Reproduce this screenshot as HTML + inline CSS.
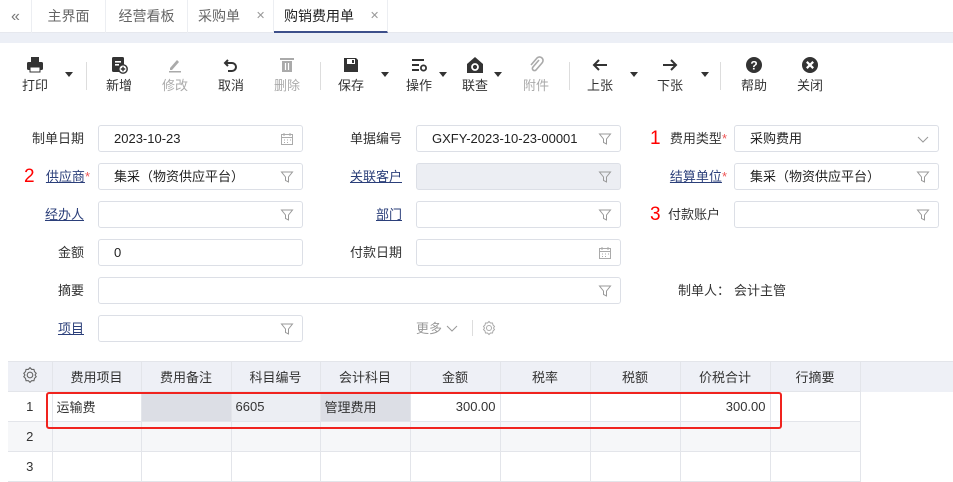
<!DOCTYPE html>
<html><head><meta charset="utf-8"><style>
*{box-sizing:border-box;margin:0;padding:0}
body{width:953px;height:471px;overflow:hidden;background:#fff;font-family:"Liberation Sans","Noto Sans CJK SC",sans-serif;font-size:13px;color:#333;position:relative}
.abs{position:absolute}
.tabs{left:0;top:0;width:953px;height:33px;background:#fff;border-bottom:1px solid #e6e8ee}
.tab{position:absolute;top:0;height:33px;line-height:33px;font-size:14px;color:#666;border-right:1px solid #eceef2}
.band{left:0;top:33px;width:953px;height:10px;background:#eceff6}
.tb{position:absolute;top:56px;text-align:center;font-size:13px;color:#333;width:40px}
.tb svg{display:block;margin:0 auto 1px}
.tb.dis{color:#aaa}
.caret{position:absolute;top:72px;width:0;height:0;border-left:4px solid transparent;border-right:4px solid transparent;border-top:5px solid #333}
.sep{position:absolute;top:62px;width:1px;height:28px;background:#ddd}
.lbl{position:absolute;text-align:right;font-size:13px;color:#333;height:27px;line-height:27px}
.lbl u{color:#2b3f7a;text-decoration:underline}
.lbl i{color:#e55;font-style:normal}
.inp{position:absolute;height:27px;border:1px solid #dcdfe6;border-radius:3px;background:#fff;line-height:25px;padding-left:15px;font-size:13px;color:#222}
.inp.g{background:#eceef3}
.ic{position:absolute;right:8px;top:6px}
.num{position:absolute;color:#f00;font-size:19px;line-height:27px}
table{border-collapse:collapse;position:absolute;left:8px;top:361px}
td{border:1px solid #e3e5ea;height:30px;font-size:13px;padding:0 4px}
th{height:30px;font-weight:normal;font-size:13px;background:#eef0f6;border:1px solid #e3e5ea;color:#333}
tr td:first-child,tr th:first-child{border-left:none}
</style></head><body>
<div class="abs tabs">
 <div class="tab" style="left:0;width:32px;text-align:center;font-size:16px;color:#777;font-weight:300">«</div>
 <div class="tab" style="left:32px;width:74px;text-align:center">主界面</div>
 <div class="tab" style="left:106px;width:82px;text-align:center">经营看板</div>
 <div class="tab" style="left:188px;width:86px;padding-left:10px">采购单<span style="position:absolute;left:68px;font-size:11px;color:#999">✕</span></div>
 <div class="tab" style="left:274px;width:114px;padding-left:10px;color:#222;border-bottom:2px solid #3d4f8a;height:33px">购销费用单<span style="position:absolute;left:96px;font-size:11px;color:#999">✕</span></div>
</div>
<div class="abs band"></div>

<div class="tb" style="left:15px"><svg width="18" height="18" viewBox="0 0 18 18"><rect x="5" y="1" width="8" height="5" fill="#333"/><rect x="1" y="6" width="16" height="8" rx="1.5" fill="#333"/><rect x="4" y="11" width="10" height="5" fill="#fff" stroke="#333"/></svg>打印</div>
<div class="caret" style="left:65px"></div>
<div class="sep" style="left:86px"></div>
<div class="tb" style="left:99px"><svg width="18" height="18" viewBox="0 0 18 18"><rect x="2" y="1" width="12" height="15" rx="1.5" fill="#333"/><rect x="5" y="5" width="6" height="1.6" fill="#fff"/><rect x="5" y="8" width="4" height="1.6" fill="#fff"/><circle cx="13" cy="13" r="4.2" fill="#fff" stroke="#333" stroke-width="1.4"/><path d="M13 10.8v4.4M10.8 13h4.4" stroke="#333" stroke-width="1.4"/></svg>新增</div>
<div class="tb dis" style="left:155px"><svg width="18" height="18" viewBox="0 0 18 18"><path d="M4 12l7-8 2 2-7 8H4z" fill="#aaa"/><rect x="3" y="15" width="12" height="1.5" fill="#aaa"/></svg>修改</div>
<div class="tb" style="left:211px"><svg width="18" height="18" viewBox="0 0 18 18"><path d="M6 4l-3 3 3 3" fill="none" stroke="#333" stroke-width="2"/><path d="M3 7h7a4 4 0 010 8H6" fill="none" stroke="#333" stroke-width="2"/></svg>取消</div>
<div class="tb dis" style="left:267px"><svg width="18" height="18" viewBox="0 0 18 18"><rect x="2" y="2" width="14" height="2" fill="#aaa"/><rect x="4" y="5" width="10" height="11" fill="#aaa"/><path d="M7.5 7v7M10.5 7v7" stroke="#fff" stroke-width="1.2"/></svg>删除</div>
<div class="sep" style="left:320px"></div>
<div class="tb" style="left:331px"><svg width="18" height="18" viewBox="0 0 18 18"><path d="M2 2h12l2 2v12H2z" fill="#333"/><rect x="5" y="3" width="8" height="5" fill="#fff"/><rect x="10" y="4" width="2" height="3" fill="#333"/></svg>保存</div>
<div class="caret" style="left:381px"></div>
<div class="tb" style="left:399px"><svg width="18" height="18" viewBox="0 0 18 18"><path d="M2 4h12M2 9h7M2 14h7" stroke="#333" stroke-width="2"/><circle cx="13.5" cy="12" r="2.6" fill="none" stroke="#333" stroke-width="1.8"/></svg>操作</div>
<div class="caret" style="left:439px"></div>
<div class="tb" style="left:455px"><svg width="18" height="18" viewBox="0 0 18 18"><path d="M9 1l8 7v9H1V8z" fill="#333"/><circle cx="9" cy="11" r="3" fill="none" stroke="#fff" stroke-width="1.8"/></svg>联查</div>
<div class="caret" style="left:494px"></div>
<div class="tb dis" style="left:516px"><svg width="18" height="18" viewBox="0 0 18 18"><path d="M12 4l-6 7a2 2 0 003 3l6-7a3.5 3.5 0 00-5-5L4 9" fill="none" stroke="#aaa" stroke-width="1.6"/></svg>附件</div>
<div class="sep" style="left:569px"></div>
<div class="tb" style="left:580px"><svg width="18" height="18" viewBox="0 0 18 18"><path d="M16 9H3M8 4L3 9l5 5" fill="none" stroke="#333" stroke-width="2"/></svg>上张</div>
<div class="caret" style="left:630px"></div>
<div class="tb" style="left:650px"><svg width="18" height="18" viewBox="0 0 18 18"><path d="M2 9h13M10 4l5 5-5 5" fill="none" stroke="#333" stroke-width="2"/></svg>下张</div>
<div class="caret" style="left:701px"></div>
<div class="sep" style="left:720px"></div>
<div class="tb" style="left:734px"><svg width="18" height="18" viewBox="0 0 18 18"><circle cx="9" cy="9" r="8" fill="#333"/><text x="9" y="13.5" font-size="12" font-weight="bold" fill="#fff" text-anchor="middle" font-family="Liberation Sans">?</text></svg>帮助</div>
<div class="tb" style="left:790px"><svg width="18" height="18" viewBox="0 0 18 18"><circle cx="9" cy="9" r="8" fill="#333"/><path d="M5.8 5.8l6.4 6.4M12.2 5.8l-6.4 6.4" stroke="#fff" stroke-width="2.2"/></svg>关闭</div>

<svg width="0" height="0" style="position:absolute"><defs>
<symbol id="f" viewBox="0 0 14 14"><path d="M1.5 2h11L8.5 7v5l-3-1.5V7z" fill="none" stroke="#999" stroke-width="1"/></symbol>
<symbol id="c" viewBox="0 0 14 14"><rect x="1.5" y="2.5" width="11" height="10" fill="none" stroke="#aaa"/><path d="M1.5 5.5h11M4 1v3M10 1v3M4 8h1M7 8h1M10 8h1M4 10.5h1M7 10.5h1" stroke="#aaa"/></symbol>
</defs></svg>

<div class="lbl" style="left:20px;top:125px;width:64px">制单日期</div>
<div class="inp" style="left:98px;top:125px;width:205px">2023-10-23<svg class="ic" width="14" height="14"><use href="#c"/></svg></div>
<div class="lbl" style="left:330px;top:125px;width:72px">单据编号</div>
<div class="inp" style="left:416px;top:125px;width:205px">GXFY-2023-10-23-00001<svg class="ic" width="14" height="14"><use href="#f"/></svg></div>
<div class="num" style="left:650px;top:125px">1</div>
<div class="lbl" style="left:660px;top:125px;width:67px">费用类型<i>*</i></div>
<div class="inp" style="left:734px;top:125px;width:205px">采购费用<svg class="ic" width="14" height="14" viewBox="0 0 14 14"><path d="M2 5l5 5 5-5" fill="none" stroke="#999"/></svg></div>

<div class="num" style="left:24px;top:163px">2</div>
<div class="lbl" style="left:40px;top:163px;width:50px"><u>供应商</u><i>*</i></div>
<div class="inp" style="left:98px;top:163px;width:205px">集采（物资供应平台）<svg class="ic" width="14" height="14"><use href="#f"/></svg></div>
<div class="lbl" style="left:330px;top:163px;width:72px"><u>关联客户</u></div>
<div class="inp g" style="left:416px;top:163px;width:205px"><svg class="ic" width="14" height="14"><use href="#f"/></svg></div>
<div class="lbl" style="left:660px;top:163px;width:67px"><u>结算单位</u><i>*</i></div>
<div class="inp" style="left:734px;top:163px;width:205px">集采（物资供应平台）<svg class="ic" width="14" height="14"><use href="#f"/></svg></div>

<div class="lbl" style="left:20px;top:201px;width:64px"><u>经办人</u></div>
<div class="inp" style="left:98px;top:201px;width:205px"><svg class="ic" width="14" height="14"><use href="#f"/></svg></div>
<div class="lbl" style="left:330px;top:201px;width:72px"><u>部门</u></div>
<div class="inp" style="left:416px;top:201px;width:205px"><svg class="ic" width="14" height="14"><use href="#f"/></svg></div>
<div class="num" style="left:650px;top:201px">3</div>
<div class="lbl" style="left:660px;top:201px;width:60px">付款账户</div>
<div class="inp" style="left:734px;top:201px;width:205px"><svg class="ic" width="14" height="14"><use href="#f"/></svg></div>

<div class="lbl" style="left:20px;top:239px;width:64px">金额</div>
<div class="inp" style="left:98px;top:239px;width:205px">0</div>
<div class="lbl" style="left:330px;top:239px;width:72px">付款日期</div>
<div class="inp" style="left:416px;top:239px;width:205px"><svg class="ic" width="14" height="14"><use href="#c"/></svg></div>

<div class="lbl" style="left:20px;top:277px;width:64px">摘要</div>
<div class="inp" style="left:98px;top:277px;width:523px"><svg class="ic" width="14" height="14"><use href="#f"/></svg></div>
<div class="lbl" style="left:678px;top:277px;text-align:left">制单人：</div>
<div class="lbl" style="left:734px;top:277px;text-align:left">会计主管</div>

<div class="lbl" style="left:20px;top:315px;width:64px"><u>项目</u></div>
<div class="inp" style="left:98px;top:315px;width:205px"><svg class="ic" width="14" height="14"><use href="#f"/></svg></div>
<div class="lbl" style="left:416px;top:315px;color:#999;text-align:left">更多 <svg width="12" height="10" viewBox="0 0 12 10"><path d="M1 3l5 5 5-5" fill="none" stroke="#999"/></svg></div>
<div class="abs" style="left:472px;top:320px;width:1px;height:16px;background:#ddd"></div>
<svg class="abs" style="left:481px;top:320px" width="16" height="16" viewBox="0 0 16 16"><circle cx="8" cy="8" r="2.5" fill="none" stroke="#aaa"/><path d="M8 1.5l1.5 1.5h2l.5 2 1.5 1.5-1 1.5 1 1.5-1.5 1.5-.5 2h-2L8 14.5 6.5 13h-2l-.5-2L2.5 9.5l1-1.5-1-1.5L4 5l.5-2h2z" fill="none" stroke="#aaa"/></svg>

<div class="abs" style="left:8px;top:361px;width:945px;height:31px;background:#eef0f6;border-top:1px solid #e3e5ea"></div>
<table>
<tr><th style="width:44px"><svg width="18" height="18" viewBox="0 0 16 16"><circle cx="8" cy="8" r="2.5" fill="none" stroke="#666"/><path d="M8 1.5l1.5 1.5h2l.5 2 1.5 1.5-1 1.5 1 1.5-1.5 1.5-.5 2h-2L8 14.5 6.5 13h-2l-.5-2L2.5 9.5l1-1.5-1-1.5L4 5l.5-2h2z" fill="none" stroke="#666"/></svg></th><th style="width:89px">费用项目</th><th style="width:90px">费用备注</th><th style="width:89px">科目编号</th><th style="width:90px">会计科目</th><th style="width:90px">金额</th><th style="width:90px">税率</th><th style="width:90px">税额</th><th style="width:90px">价税合计</th><th style="width:90px">行摘要</th></tr>
<tr><td style="text-align:center">1</td><td>运输费</td><td style="background:#dcdee5"></td><td style="background:#eceef3">6605</td><td style="background:#dcdee5">管理费用</td><td style="text-align:right">300.00</td><td></td><td></td><td style="text-align:right">300.00</td><td></td></tr>
<tr style="background:#f6f7f9"><td style="text-align:center">2</td><td></td><td></td><td></td><td></td><td></td><td></td><td></td><td></td><td></td></tr>
<tr><td style="text-align:center">3</td><td></td><td></td><td></td><td></td><td></td><td></td><td></td><td></td><td></td></tr>
</table>
<div class="abs" style="left:46px;top:392px;width:736px;height:37px;border:2.5px solid #f0231e;border-radius:3px"></div>
</body></html>
